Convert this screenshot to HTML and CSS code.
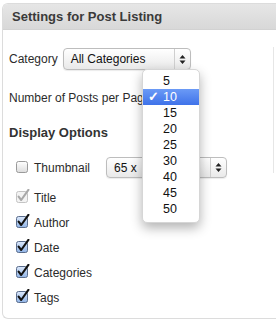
FILE: index.html
```html
<!DOCTYPE html>
<html lang="en">
<head>
    <meta charset="UTF-8">
    <title>Settings for Post Listing</title>
    <link rel="stylesheet" href="styles.css">
</head>
<body>

    <!-- Settings Panel -->
    <div class="panel">
        <div class="panel-header">Settings for Post Listing</div>

        <div class="panel-body">
            <div class="options">

                <!-- Category -->
                <div class="field field-category">
                    <span class="label">Category</span>
                    <div class="select select-category">
                        <span class="select-value">All Categories</span>
                        <span class="select-arrows">
                            <svg width="7" height="11" viewBox="0 0 7 11"><path d="M3.5 1 L6.5 4.5 L0.5 4.5 Z M3.5 10 L6.5 6.5 L0.5 6.5 Z" fill="#222"/></svg>
                        </span>
                    </div>
                </div>

                <!-- Posts per page (its popup is open below) -->
                <div class="field field-posts">
                    <span class="label">Number of Posts per Pag</span>
                </div>

                <h3 class="section-title">Display Options</h3>

                <!-- Thumbnail -->
                <div class="check-row row-thumb">
                    <svg class="checkbox" width="14" height="15" viewBox="0 0 14 15">
                        <defs>
                            <linearGradient id="off" x1="0" y1="0" x2="0" y2="1">
                                <stop offset="0" stop-color="#ffffff"/>
                                <stop offset="1" stop-color="#dcdcdc"/>
                            </linearGradient>
                        </defs>
                        <rect x="0.5" y="2.5" width="11" height="11" rx="2" fill="url(#off)" stroke="#9a9a9a"/>
                    </svg>
                    <span class="check-label">Thumbnail</span>
                    <div class="select select-thumb">
                        <span class="select-value">65 x</span>
                        <span class="select-arrows">
                            <svg width="7" height="11" viewBox="0 0 7 11"><path d="M3.5 1 L6.5 4.5 L0.5 4.5 Z M3.5 10 L6.5 6.5 L0.5 6.5 Z" fill="#222"/></svg>
                        </span>
                    </div>
                </div>

                <div class="check-row row-title">
                    <svg class="checkbox" width="14" height="15" viewBox="0 0 14 15">
                        <rect x="0.5" y="2.5" width="11" height="11" rx="2" fill="#f3f3f3" stroke="#c4c4c4"/>
                        <path d="M2.6 7.6 L5.2 11 L12.4 0.8" fill="none" stroke="#a8a8a8" stroke-width="2.1" stroke-linecap="round" stroke-linejoin="round"/>
                    </svg>
                    <span class="check-label">Title</span>
                </div>

                <div class="check-row">
                    <svg class="checkbox" width="14" height="15" viewBox="0 0 14 15">
                        <defs>
                            <linearGradient id="on" x1="0" y1="0" x2="0" y2="1">
                                <stop offset="0" stop-color="#dde9fb"/>
                                <stop offset="1" stop-color="#8fb3e6"/>
                            </linearGradient>
                        </defs>
                        <rect x="0.5" y="2.5" width="11" height="11" rx="2" fill="url(#on)" stroke="#5a6d8c"/>
                        <path d="M2.6 7.6 L5.2 11 L12.4 0.8" fill="none" stroke="#111" stroke-width="2.1" stroke-linecap="round" stroke-linejoin="round"/>
                    </svg>
                    <span class="check-label">Author</span>
                </div>

                <div class="check-row">
                    <svg class="checkbox" width="14" height="15" viewBox="0 0 14 15">
                        <rect x="0.5" y="2.5" width="11" height="11" rx="2" fill="url(#on)" stroke="#5a6d8c"/>
                        <path d="M2.6 7.6 L5.2 11 L12.4 0.8" fill="none" stroke="#111" stroke-width="2.1" stroke-linecap="round" stroke-linejoin="round"/>
                    </svg>
                    <span class="check-label">Date</span>
                </div>

                <div class="check-row">
                    <svg class="checkbox" width="14" height="15" viewBox="0 0 14 15">
                        <rect x="0.5" y="2.5" width="11" height="11" rx="2" fill="url(#on)" stroke="#5a6d8c"/>
                        <path d="M2.6 7.6 L5.2 11 L12.4 0.8" fill="none" stroke="#111" stroke-width="2.1" stroke-linecap="round" stroke-linejoin="round"/>
                    </svg>
                    <span class="check-label">Categories</span>
                </div>

                <div class="check-row">
                    <svg class="checkbox" width="14" height="15" viewBox="0 0 14 15">
                        <rect x="0.5" y="2.5" width="11" height="11" rx="2" fill="url(#on)" stroke="#5a6d8c"/>
                        <path d="M2.6 7.6 L5.2 11 L12.4 0.8" fill="none" stroke="#111" stroke-width="2.1" stroke-linecap="round" stroke-linejoin="round"/>
                    </svg>
                    <span class="check-label">Tags</span>
                </div>

            </div>

            <div class="side"></div>
        </div>

        <!-- Open popup of the posts per page select -->
        <ul class="popup">
            <li>5</li>
            <li class="selected"><span class="tick">&#10003;</span>10</li>
            <li>15</li>
            <li>20</li>
            <li>25</li>
            <li>30</li>
            <li>40</li>
            <li>45</li>
            <li>50</li>
        </ul>
    </div>

</body>
</html>
```

FILE: styles.css
```css
/* Base Styles */
body {
    margin: 0;
    font-family: "Liberation Sans", Arial, sans-serif;
    font-size: 12px;
    color: #2b2b2b;
    background: #fff;
}

/* Panel (runs on past the right edge, so no right border) */
.panel {
    position: relative;
    width: 274px;
    height: 316px;
    margin: 3px 0 0 2px;
    border: 1px solid #dcdcdc;
    border-right: none;
    border-radius: 6px 0 0 6px;
    box-sizing: border-box;
    background: #fff;
}

.panel-header {
    height: 25px;
    padding-left: 9px;
    line-height: 25px;
    font-size: 13px;
    font-weight: bold;
    color: #3a3a3a;
    background: linear-gradient(#e6e6e6, #d8d8d8);
    border-bottom: 1px solid #d2d2d2;
    border-radius: 5px 0 0 0;
}

.panel-body {
    display: flex;
    padding: 18px 0 0 6px;
}

.options {
    width: 264px;
}

.side {
    height: 126px;
    margin-top: -1px;
    border-left: 1px solid #e6e6e6;
}

/* Fields */
.field {
    display: flex;
    align-items: center;
    height: 22px;
}

.field-posts {
    margin-top: 17px;
}

.field .label {
    margin-right: 5px;
    white-space: nowrap;
}

/* Selects */
.select {
    display: flex;
    align-items: center;
    height: 22px;
    box-sizing: border-box;
    border: 1px solid #bdbdbd;
    border-radius: 4px;
    background: linear-gradient(#ffffff, #e9e9e9);
    box-shadow: 0 1px 1px rgba(0, 0, 0, 0.08);
}

.select-value {
    flex: 1;
    padding-left: 7px;
    color: #111;
    white-space: nowrap;
    overflow: hidden;
}

.select-arrows {
    display: flex;
    align-items: center;
    justify-content: center;
    width: 15px;
    height: 100%;
    border-left: 1px solid #cfcfcf;
}

.select-category {
    width: 128px;
}

.select-thumb {
    width: 121px;
    height: 21px;
    margin-left: 16px;
}

/* Section title */
.section-title {
    margin: 15px 0 0;
    height: 18px;
    line-height: 18px;
    font-size: 13px;
    font-weight: bold;
    color: #333;
}

/* Checkbox rows */
.check-row {
    display: flex;
    align-items: center;
    height: 25px;
    padding-left: 7px;
}

.row-thumb {
    height: 21px;
    margin-top: 15px;
}

.row-title {
    margin-top: 7px;
}

.checkbox {
    margin-top: -3px;
    margin-right: 4px;
    flex-shrink: 0;
}

/* Popup menu */
.popup {
    position: absolute;
    left: 139px;
    top: 65px;
    width: 56px;
    margin: 0;
    padding: 3px 0 5px;
    list-style: none;
    background: #fff;
    border: 1px solid #d6d6d6;
    border-radius: 5px;
    box-shadow: 0 5px 12px rgba(0, 0, 0, 0.3);
}

.popup li {
    position: relative;
    height: 16px;
    line-height: 16px;
    padding-left: 20px;
    font-size: 12.5px;
    color: #111;
}

.popup li.selected {
    color: #fff;
    background: linear-gradient(#6b9af6, #3f72e9);
}

.tick {
    position: absolute;
    left: 5px;
    font-weight: bold;
}
```
